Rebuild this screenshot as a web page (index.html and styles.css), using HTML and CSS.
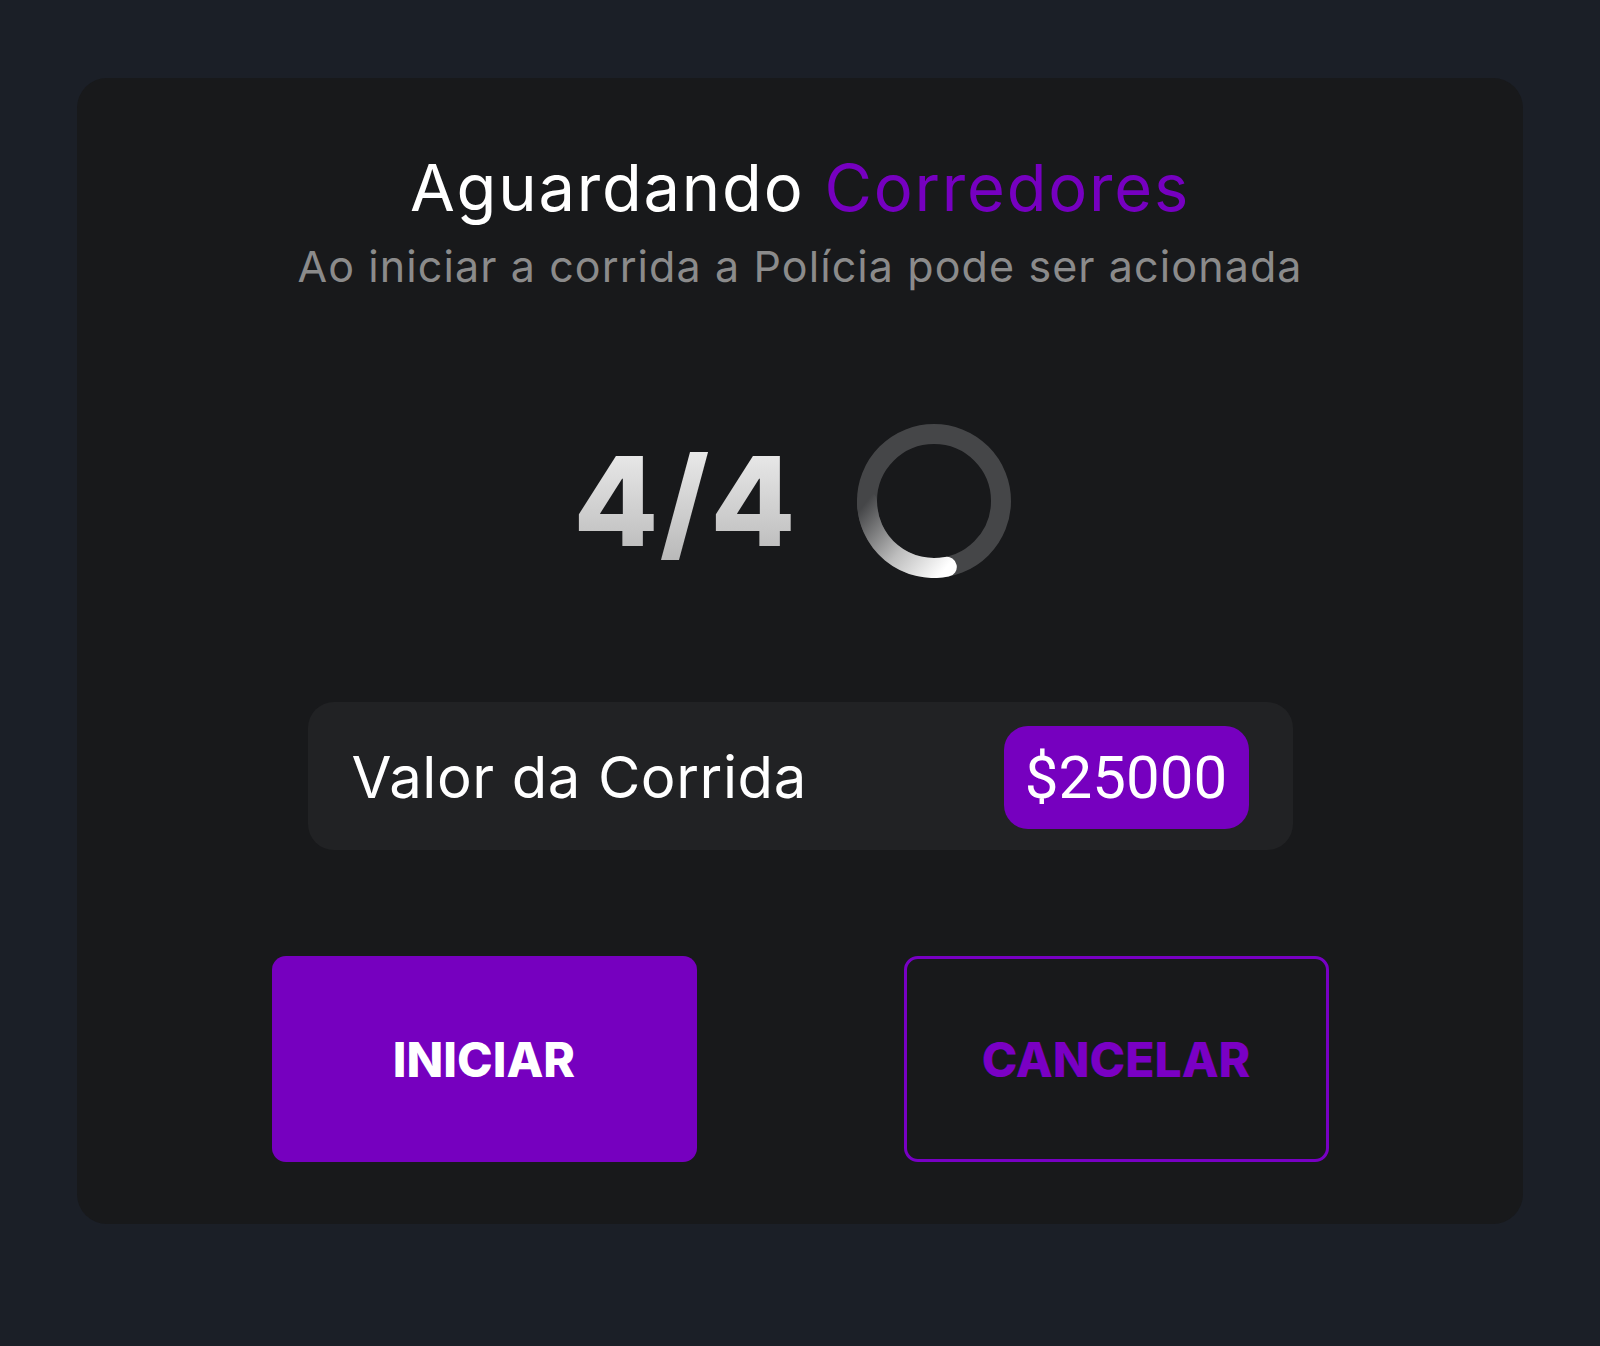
FILE: index.html
```html
<!DOCTYPE html>
<html>
  <head>
    <title>Aguardando Corredores</title>
    <link rel="stylesheet" href="styles.css">
  </head>
  <body>
    <div class="card">
      <h1 class="title">Aguardando <span class="accent">Corredores</span></h1>
      <p class="subtitle">Ao iniciar a corrida a Polícia pode ser acionada</p>

      <div class="counter">
        <span class="count">4/4</span>
        <svg class="spinner" width="154" height="154" viewBox="-77 -77 154 154">
          <defs>
            <linearGradient id="arcGrad" gradientUnits="userSpaceOnUse" x1="-67" y1="0" x2="13" y2="66">
              <stop offset="0" stop-color="#454648"/>
              <stop offset="0.55" stop-color="#bdbdbd"/>
              <stop offset="1" stop-color="#ffffff"/>
            </linearGradient>
          </defs>
          <circle cx="0" cy="0" r="67" fill="none" stroke="#454648" stroke-width="20"/>
          <path d="M -67 0 A 67 67 0 0 0 12.8 65.8" fill="none" stroke="url(#arcGrad)" stroke-width="20" stroke-linecap="round"/>
        </svg>
      </div>

      <div class="value-box">
        <span class="value-label">Valor da Corrida</span>
        <span class="value-badge">$25000</span>
      </div>

      <div class="actions">
        <button type="button" class="btn btn-start">INICIAR</button>
        <button type="button" class="btn btn-cancel">CANCELAR</button>
      </div>
    </div>
  </body>
</html>
```

FILE: styles.css
```css
body {
  margin: 0;
  padding: 78px 0 0;
  background-color: #1b1f27;
  font-family: "Inter", "Noto Sans", sans-serif;
  color: #ffffff;
}
.card {
  width: 1446px;
  margin: 0 auto;
  box-sizing: border-box;
  padding: 77px 0 62px;
  background-color: #18191b;
  border-radius: 30px;
  display: flex;
  flex-direction: column;
  align-items: center;
}
.title {
  margin: 0;
  font-size: 65px;
  font-weight: 400;
  line-height: 1;
  letter-spacing: 1.8px;
  color: #ffffff;
}
.accent {
  color: #7600c0;
}
.subtitle {
  margin: 25px 0 0;
  font-size: 43px;
  line-height: 1;
  letter-spacing: 1.1px;
  color: #8b8b8b;
}
.counter {
  margin-top: 136px;
  margin-right: 16px;
  display: flex;
  align-items: center;
  gap: 60px;
}
.count {
  font-size: 124px;
  font-weight: 800;
  line-height: 1;
  letter-spacing: 1px;
  background: linear-gradient(180deg, #eeeeee, #b8b8b8);
  -webkit-background-clip: text;
  background-clip: text;
  color: transparent;
}
.spinner {
  display: block;
}
.value-box {
  margin-top: 124px;
  width: 985px;
  height: 148px;
  box-sizing: border-box;
  padding: 0 44px;
  background-color: #212224;
  border-radius: 26px;
  display: flex;
  align-items: center;
  justify-content: space-between;
}
.value-label {
  font-size: 58px;
  line-height: 1;
  letter-spacing: 0.6px;
  margin-top: 2px;
}
.value-badge {
  height: 103px;
  width: 245px;
  box-sizing: border-box;
  display: flex;
  align-items: center;
  justify-content: center;
  background-color: #7600bf;
  border-radius: 24px;
  font-family: "Roboto", sans-serif;
  font-size: 60px;
  margin-top: 3px;
}
.actions {
  margin-top: 106px;
  display: flex;
  gap: 207px;
}
.btn {
  width: 425px;
  height: 206px;
  box-sizing: border-box;
  border-radius: 14px;
  font-family: "Inter", sans-serif;
  font-size: 48px;
  font-weight: 800;
  cursor: pointer;
}
.btn-start {
  background-color: #7600bf;
  border: none;
  color: #ffffff;
}
.btn-cancel {
  background-color: transparent;
  border: 3px solid #7800c4;
  color: #7a00c4;
}
```
